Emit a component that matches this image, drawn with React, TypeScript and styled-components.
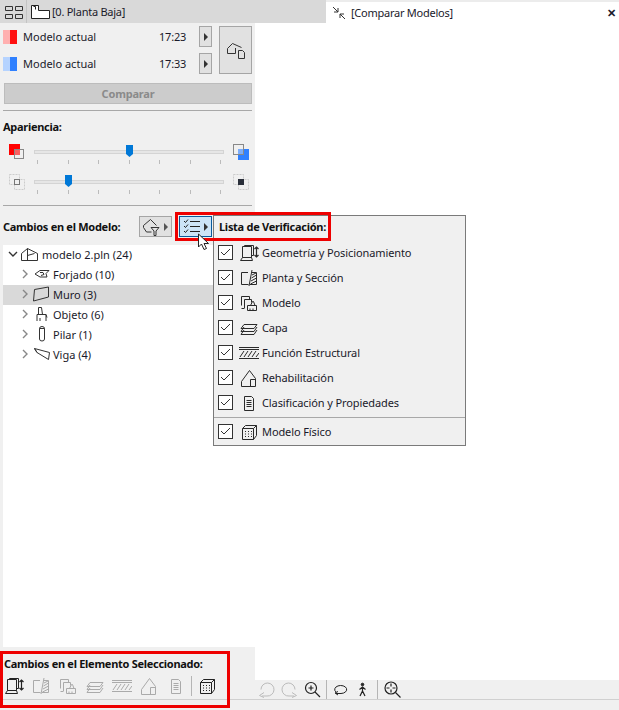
import React from "react";
import styled, { createGlobalStyle } from "styled-components";

const GlobalStyle = createGlobalStyle`
  html, body { margin: 0; padding: 0; background: #f0f0f0; }
  body { font-family: "Noto Sans", "Open Sans", sans-serif; font-size: 11px; color: #1a1a2a; }
  * { box-sizing: border-box; }
`;

const Page = styled.div`
  position: relative;
  width: 619px;
  height: 710px;
  display: flex;
  flex-direction: column;
  overflow: hidden;
`;

// Top tabs
const TabBar = styled.div`
  height: 23px;
  display: flex;
  flex: none;
  letter-spacing: -0.25px;
`;
const PlanTab = styled.div`
  width: 326px;
  background: #d9d9d9;
  display: flex;
  align-items: center;
  padding-left: 5px;
  gap: 1px;
`;
const TabDivider = styled.div`
  width: 1px;
  height: 23px;
  background: #c4c4c4;
  margin: 0 3px 0 2px;
`;
const ModelTab = styled.div`
  flex: 1;
  background: #fff;
  border-top: 2px solid #ececec;
  display: flex;
  align-items: center;
  padding: 0 3px 0 6px;
  gap: 5px;
`;
const TabTitle = styled.span`
  flex: 1;
`;
const Close = styled.span`
  font-size: 11px;
  font-weight: 700;
`;

const Body = styled.div`
  flex: 1;
  display: flex;
  min-height: 0;
`;

// Left panel
const Sidebar = styled.div`
  width: 255px;
  flex: none;
  display: flex;
  flex-direction: column;
  background: #f0f0f0;
`;
const CompareBlock = styled.div`
  display: flex;
  flex: none;
  padding: 3px 3px 0 3px;
  height: 52px;
`;
const ModelRows = styled.div`
  width: 213px;
  display: flex;
  flex-direction: column;
  gap: 6px;
`;
const ModelRow = styled.div`
  height: 21px;
  display: flex;
  align-items: center;
`;
const Swatch = styled.div<{ $light: string; $strong: string }>`
  width: 14px;
  height: 14px;
  background: linear-gradient(90deg, ${(p) => p.$light} 50%, ${(p) => p.$strong} 50%);
`;
const ModelName = styled.span`
  margin-left: 6px;
  width: 136px;
`;
const ModelTime = styled.span`
  width: 40px;
  letter-spacing: -0.2px;
`;
const ArrowButton = styled.button`
  width: 13px;
  height: 21px;
  padding: 0;
  border: 1px solid #a5a5a5;
  background: #e1e1e1;
  display: flex;
  align-items: center;
  justify-content: center;
`;
const Arrow = styled.span<{ $color?: string }>`
  display: block;
  width: 0;
  height: 0;
  flex: none;
  border-left: 4px solid ${(p) => p.$color || "#333"};
  border-top: 4px solid transparent;
  border-bottom: 4px solid transparent;
`;
const BigButton = styled.button`
  width: 33px;
  height: 48px;
  margin-left: 3px;
  padding: 0;
  border: 1px solid #a5a5a5;
  background: #e1e1e1;
  display: flex;
  align-items: center;
  justify-content: center;
`;
const CompareButton = styled.button`
  margin: 8px 3px 0 4px;
  height: 21px;
  flex: none;
  border: 1px solid #bcbcbc;
  background: #cccccc;
  color: #8a8a8a;
  font: 700 11px "Noto Sans", sans-serif;
  letter-spacing: -0.2px;
  padding: 0;
`;
const Rule = styled.div<{ $top?: number; $bottom?: number }>`
  height: 1px;
  flex: none;
  margin: ${(p) => p.$top || 0}px 3px ${(p) => p.$bottom || 0}px;
  background: #a8a8a8;
`;
const SectionLabel = styled.div`
  font-weight: 700;
  line-height: 15px;
  padding-left: 3px;
  color: #111;
  letter-spacing: -0.28px;
`;
const SliderGroup = styled.div`
  display: flex;
  flex-direction: column;
  flex: none;
  gap: 3px;
  margin-top: 14px;
`;
const SliderRow = styled.div`
  display: flex;
  align-items: flex-start;
  height: 27px;
  padding-left: 9px;
`;
const SliderBox = styled.div`
  position: relative;
  width: 190px;
  margin: 0 9px;
  padding-top: 2px;
`;
const Track = styled.div`
  height: 4px;
  background: #e6e6e6;
  border: 1px solid #d4d4d4;
`;
const Thumb = styled.div<{ $at: number }>`
  position: absolute;
  top: -3px;
  left: ${(p) => p.$at}px;
  width: 7px;
  height: 12px;
  background: #0078d7;
  clip-path: polygon(0 0, 100% 0, 100% 75%, 50% 100%, 0 75%);
`;
const Ticks = styled.div`
  display: flex;
  justify-content: space-between;
  padding: 0 3px;
  margin-top: 6px;
`;
const Tick = styled.span`
  width: 1px;
  height: 4px;
  background: #bbb;
`;
const SideIcon = styled.svg`
  flex: none;
  margin-top: -4px;
`;
const ChangesHeader = styled.div`
  height: 39px;
  flex: none;
  display: flex;
  align-items: center;
  padding: 2px 0 0 3px;
  font-weight: 700;
  color: #111;
  letter-spacing: -0.28px;
`;
const ChangesLabel = styled.span`
  width: 136px;
`;
const DropButton = styled.button<{ $active?: boolean }>`
  width: 33px;
  height: 21px;
  margin-right: 7px;
  padding: 0 3px 0 2px;
  border: 1px solid ${(p) => (p.$active ? "#0a5a9c" : "#a5a5a5")};
  background: ${(p) => (p.$active ? "#cce4f7" : "#e1e1e1")};
  display: flex;
  align-items: center;
  justify-content: space-between;
`;
const Tree = styled.div`
  flex: 1;
  margin-left: 3px;
  background: #fff;
`;
const TreeRow = styled.div<{ $depth: number; $selected?: boolean }>`
  height: 20px;
  display: flex;
  align-items: center;
  padding-left: ${(p) => (p.$depth ? 17 : 5)}px;
  padding-bottom: 2px;
  background: ${(p) => (p.$selected ? "#d9d9d9" : "transparent")};
  gap: 3px;
`;
const TreeIconSlot = styled.span`
  width: 17px;
  display: flex;
  justify-content: center;
  flex: none;
`;
const RootIconSlot = styled(TreeIconSlot)`
  margin-right: 1px;
`;
const Chevron = styled.svg`
  flex: none;
`;
const SelectedPanel = styled.div`
  height: 52px;
  flex: none;
  padding: 9px 0 0 4px;
`;
const SelectedTitle = styled.div`
  font-weight: 700;
  line-height: 15px;
  color: #111;
  letter-spacing: -0.28px;
`;
const IconStrip = styled.div`
  display: flex;
  align-items: center;
  height: 24px;
  margin-top: 3px;
  gap: 7px;
  color: #aaa;
`;
const StripDivider = styled.div`
  width: 1px;
  height: 20px;
  background: #b5b5b5;
  margin: 0 -2px;
`;
const DarkIcon = styled.span`
  color: #222;
  display: flex;
`;

// Right view
const View = styled.div`
  flex: 1;
  display: flex;
  flex-direction: column;
`;
const Canvas = styled.div`
  flex: 1;
  background: #fff;
`;
const ViewToolbar = styled.div`
  height: 19px;
  flex: none;
  display: flex;
  align-items: center;
  padding-left: 3px;
  gap: 6px;
`;
const ToolIcon = styled.span<{ $muted?: boolean }>`
  color: ${(p) => (p.$muted ? "#bbb" : "#222")};
  display: flex;
`;
const WalkIcon = styled(ToolIcon)`
  margin: 0 4px 0 3px;
`;
const ToolDivider = styled.div`
  width: 1px;
  height: 19px;
  background: #b5b5b5;
  margin-left: -1px;
`;
const StatusBar = styled.div`
  height: 11px;
  flex: none;
  border-top: 1px solid #d0d0d0;
`;

// Overlays
const Menu = styled.div`
  position: absolute;
  left: 213px;
  top: 215px;
  width: 253px;
  height: 231px;
  background: #f0f0f0;
  border: 1px solid #7a7a7a;
  display: flex;
  flex-direction: column;
`;
const MenuTitle = styled.div`
  height: 24px;
  padding: 3px 0 0 5px;
  font-weight: 700;
  line-height: 15px;
  color: #111;
  letter-spacing: -0.28px;
`;
const MenuRow = styled.div`
  height: 25px;
  flex: none;
  display: flex;
  align-items: center;
  padding-left: 4px;
  letter-spacing: -0.1px;
`;
const Check = styled.span`
  width: 15px;
  height: 15px;
  border: 1px solid #333;
  background: #fff;
  display: flex;
  align-items: center;
  justify-content: center;
  margin-right: 5px;
`;
const MenuIcon = styled.span`
  width: 22px;
  display: flex;
  justify-content: center;
  margin-right: 2px;
  color: #2a2a2a;
`;
const MenuRule = styled.div`
  height: 1px;
  background: #a8a8a8;
  margin: 2px 0 1px 0;
`;
const Callout = styled.div<{ $l: number; $t: number; $w: number; $h: number }>`
  position: absolute;
  left: ${(p) => p.$l}px;
  top: ${(p) => p.$t}px;
  width: ${(p) => p.$w}px;
  height: ${(p) => p.$h}px;
  border: 3px solid #ee0000;
  pointer-events: none;
`;
const CursorMark = styled.svg`
  position: absolute;
  left: 197px;
  top: 233px;
`;
const PlainSvg = styled.svg`
  display: block;
  flex: none;
`;

type IconProps = { children: React.ReactNode; w?: number; h?: number };
const Ico = ({ children, w = 20, h = 18 }: IconProps) => (
  <PlainSvg width={w} height={h} viewBox={`0 0 ${w} ${h}`} fill="none" stroke="currentColor" strokeWidth="1">
    {children}
  </PlainSvg>
);

const GeometryIcon = () => (
  <Ico>
    <path d="M3.500 13.500v-11h9v11zM5.500 2.500v-1h9v10h-2M1.500 16.500l2-3h9l1 3z" />
    <path d="M17.500 3v10M15.500 5l2-2 2 2M15.500 11l2 2 2-2" strokeWidth="1.2" />
  </Ico>
);
const PlanIcon = () => (
  <Ico>
    <path d="M9 3.500H2.500v12h7M13 3.500h4.500v12H11" />
    <path d="M13 1l-3 16M13 6l4-2M12.500 9l5-3M12 12l5.500-3M11.500 15l6-3" />
  </Ico>
);
const ModelIcon = () => (
  <Ico>
    <path d="M2.500 11.500v-9h8v3M5 14.500H2.500M5.500 5.500h7v3M5.500 5.500v9" />
    <path d="M8.500 16.500v-5h9v5zM11.500 11.500l2-4h1l1.500 4M11 16.500v-2M14 16.500v-2" />
  </Ico>
);
const LayerIcon = () => (
  <Ico>
    <path d="M5 5.500h13l-3 4H2zM5 8l-3 4.500h13l3-4.500M5 11l-3 4.500h13l3-4.500" />
  </Ico>
);
const StructureIcon = () => (
  <Ico>
    <path d="M0 3.500h20M0 5.500h20M0 14.500h20" />
    <path d="M1 13l4-6M5 13l4-6M9 13l4-6M13 13l4-6M17 13l3-4" />
  </Ico>
);
const RenovationIcon = () => (
  <Ico>
    <path d="M2.500 17.500v-5l8-11 6 8v8zM11.500 17.500v-7h5" />
  </Ico>
);
const ListIcon = () => (
  <Ico>
    <path d="M5.500 2.500h7l2 2v12h-9zM7.500 6.500h5M7.500 8.500h5M7.500 10.500h5M7.500 12.500h5" />
  </Ico>
);
const PhysicalIcon = () => (
  <Ico>
    <path d="M3.500 5.500l3-3h11v10l-3 4h-11zM3.500 5.500h11v11M14.500 5.500l3-3" />
    <path d="M6 8.500h1M9 8.500h1M12 8.500h1M6 11h1M9 11h1M12 11h1M6 13.500h1M9 13.500h1M12 13.500h1" />
  </Ico>
);
const ChecklistIcon = () => (
  <PlainSvg width="19" height="17" viewBox="0 0 19 17" fill="none" stroke="#222">
    <path d="M8 3.500h10M8 8.500h10M8 13.500h10" />
    <path d="M2 3l1.500 1.500L6 1.500M2 8l1.500 1.500L6 6.500M2 13l1.500 1.500L6 11.500" />
  </PlainSvg>
);
const Tickmark = () => (
  <PlainSvg width="11" height="9" viewBox="0 0 11 9" fill="none" stroke="#333">
    <path d="M1 4l3 3 6-6" />
  </PlainSvg>
);

const TreeChevron = ({ open }: { open?: boolean }) => (
  <Chevron width="10" height="10" viewBox="0 0 10 10" fill="none" stroke={open ? "#333" : "#888"} strokeWidth="1.4">
    <path d={open ? "M1 3l4 4 4-4" : "M3 1l4 4-4 4"} />
  </Chevron>
);

const checks = [
  { label: "Geometría y Posicionamiento", icon: <GeometryIcon /> },
  { label: "Planta y Sección", icon: <PlanIcon /> },
  { label: "Modelo", icon: <ModelIcon /> },
  { label: "Capa", icon: <LayerIcon /> },
  { label: "Función Estructural", icon: <StructureIcon /> },
  { label: "Rehabilitación", icon: <RenovationIcon /> },
  { label: "Clasificación y Propiedades", icon: <ListIcon /> },
];

const treeItems = [
  {
    label: "Forjado (10)",
    icon: (
      <svg width="16" height="12" viewBox="0 0 16 12" fill="none" stroke="#333">
        <path d="M1 6L6 2.500h9l-3 3 1 3.500H6zM6 4.500h3l1 2-3 1" />
      </svg>
    ),
  },
  {
    label: "Muro (3)",
    selected: true,
    icon: (
      <svg width="17" height="16" viewBox="0 0 17 16" fill="none" stroke="#333">
        <path d="M1.500 3.500L15.500 1v10L.5 15z" />
      </svg>
    ),
  },
  {
    label: "Objeto (6)",
    icon: (
      <svg width="12" height="16" viewBox="0 0 12 16" fill="none" stroke="#333">
        <path d="M2.500 8V1.500h3l1 7M1 15V8.500h9V15M4 15v-3M10 8.500l1 3" />
      </svg>
    ),
  },
  {
    label: "Pilar (1)",
    icon: (
      <svg width="8" height="16" viewBox="0 0 8 16" fill="none" stroke="#333">
        <path d="M1.500 2.500a2.500 2 0 0 1 5 0V13a2.500 2 0 0 1-5 0zM1.500 2.500h5" />
      </svg>
    ),
  },
  {
    label: "Viga (4)",
    icon: (
      <svg width="16" height="14" viewBox="0 0 16 14" fill="none" stroke="#333">
        <path d="M.5 1.500l15 4-1 7L3 5.500zM.5 1.500L3 5.500" />
      </svg>
    ),
  },
];

const ticks = [0, 1, 2, 3, 4, 5, 6];

const Slider = ({ at }: { at: number }) => (
  <SliderBox>
    <Track />
    <Thumb $at={at} />
    <Ticks>
      {ticks.map((t) => (
        <Tick key={t} />
      ))}
    </Ticks>
  </SliderBox>
);

const App = () => {
  return (
    <Page>
      <GlobalStyle />
      <TabBar>
        <PlanTab>
          <PlainSvg width="18" height="14" viewBox="0 0 18 14" fill="none" stroke="#333">
            <path d="M.5 1.500h7v4h-7zM10.500 1.500h7v4h-7zM.5 9.500h7v4h-7zM10.500 9.500h7v4h-7z" />
          </PlainSvg>
          <TabDivider />
          <PlainSvg width="20" height="16" viewBox="0 0 20 16" fill="#fff" stroke="#222">
            <path d="M.5 1.500h7v5h11v8H.5z" />
            <path d="M2.500 2.500h2v3" fill="none" />
          </PlainSvg>
          [0. Planta Baja]
        </PlanTab>
        <ModelTab>
          <PlainSvg width="14" height="14" viewBox="0 0 14 14" fill="none" stroke="#333">
            <path d="M1 1l5 5M6 2v4H2M13 13L8 8M8 12V8h4" />
          </PlainSvg>
          <TabTitle>[Comparar Modelos]</TabTitle>
          <Close>✕</Close>
        </ModelTab>
      </TabBar>
      <Body>
        <Sidebar>
          <CompareBlock>
            <ModelRows>
              <ModelRow>
                <Swatch $light="#ffb0b0" $strong="#ff1010" />
                <ModelName>Modelo actual</ModelName>
                <ModelTime>17:23</ModelTime>
                <ArrowButton>
                  <Arrow />
                </ArrowButton>
              </ModelRow>
              <ModelRow>
                <Swatch $light="#b5d3ff" $strong="#2f80ff" />
                <ModelName>Modelo actual</ModelName>
                <ModelTime>17:33</ModelTime>
                <ArrowButton>
                  <Arrow />
                </ArrowButton>
              </ModelRow>
            </ModelRows>
            <BigButton>
              <svg width="20" height="20" viewBox="0 0 20 20" fill="none" stroke="#333">
                <path d="M1.500 13.500v-5l5-5 9 4M1.500 13.500h8M9.500 8v5.500" />
                <path d="M12.500 10.500h4l2 2v6h-6z" fill="#e1e1e1" />
              </svg>
            </BigButton>
          </CompareBlock>
          <CompareButton>Comparar</CompareButton>
          <Rule $top={6} $bottom={8} />
          <SectionLabel>Apariencia:</SectionLabel>
          <SliderGroup>
            <SliderRow>
              <SideIcon width="16" height="16" viewBox="0 0 16 16" fill="none">
                <rect x="0" y="0" width="11" height="11" fill="#ff0000" />
                <rect x="5.500" y="5.500" width="9" height="9" stroke="#888" fill="#f0f0f0" fillOpacity="0.4" />
              </SideIcon>
              <Slider at={92} />
              <SideIcon width="16" height="16" viewBox="0 0 16 16" fill="none">
                <rect x="5" y="5" width="11" height="11" fill="#2f80ff" />
                <rect x="0.500" y="0.500" width="10" height="10" stroke="#888" fill="#f0f0f0" fillOpacity="0.4" />
              </SideIcon>
            </SliderRow>
            <SliderRow>
              <SideIcon width="16" height="16" viewBox="0 0 16 16" fill="none">
                <rect x="0.500" y="0.500" width="10" height="10" stroke="#ccc" strokeDasharray="2 1" />
                <rect x="5.500" y="5.500" width="10" height="10" stroke="#ccc" strokeDasharray="2 1" />
                <rect x="5.500" y="5.500" width="5" height="5" stroke="#777" />
              </SideIcon>
              <Slider at={31} />
              <SideIcon width="16" height="16" viewBox="0 0 16 16" fill="none">
                <rect x="0.500" y="0.500" width="10" height="10" stroke="#ccc" strokeDasharray="2 1" />
                <rect x="5.500" y="5.500" width="10" height="10" stroke="#ccc" strokeDasharray="2 1" />
                <rect x="5" y="5" width="6" height="6" fill="#2a2f3a" />
              </SideIcon>
            </SliderRow>
          </SliderGroup>
          <Rule />
          <ChangesHeader>
            <ChangesLabel>Cambios en el Modelo:</ChangesLabel>
            <DropButton>
              <PlainSvg width="18" height="18" viewBox="0 0 18 18" fill="none" stroke="#333">
                <path d="M1.500 9.500v-2l7-6 6 6M1.500 9.500l3 4.500h5" />
                <path d="M9 9.500h8l-3 3.500v4.500h-2V13z" fill="#e1e1e1" />
              </PlainSvg>
              <Arrow $color="#555" />
            </DropButton>
            <DropButton $active>
              <ChecklistIcon />
              <Arrow />
            </DropButton>
          </ChangesHeader>
          <Tree>
            <TreeRow $depth={0}>
              <TreeChevron open />
              <RootIconSlot>
                <svg width="17" height="14" viewBox="0 0 17 14" fill="none" stroke="#333">
                  <path d="M.5 13.500v-7l6-5 10 5v7zM6.500 1.500v12M6.500 8.500l7-2" />
                </svg>
              </RootIconSlot>
              <span>modelo 2.pln (24)</span>
            </TreeRow>
            {treeItems.map((item) => (
              <TreeRow key={item.label} $depth={1} $selected={item.selected}>
                <TreeChevron />
                <TreeIconSlot>{item.icon}</TreeIconSlot>
                <span>{item.label}</span>
              </TreeRow>
            ))}
          </Tree>
          <SelectedPanel>
            <SelectedTitle>Cambios en el Elemento Seleccionado:</SelectedTitle>
            <IconStrip>
              <DarkIcon>
                <GeometryIcon />
              </DarkIcon>
              <PlanIcon />
              <ModelIcon />
              <LayerIcon />
              <StructureIcon />
              <RenovationIcon />
              <ListIcon />
              <StripDivider />
              <DarkIcon>
                <PhysicalIcon />
              </DarkIcon>
            </IconStrip>
          </SelectedPanel>
        </Sidebar>
        <View>
          <Canvas />
          <ViewToolbar>
            <ToolIcon $muted>
              <Ico w={17} h={17}>
                <path d="M3 8.500A6.500 6.500 0 1 1 9 15H4" />
                <path d="M6 11.500l-4.500 3 4.500 2" />
              </Ico>
            </ToolIcon>
            <ToolIcon $muted>
              <Ico w={17} h={17}>
                <path d="M14 8.500A6.500 6.500 0 1 0 8 15h5" />
                <path d="M11 11.500l4.500 3-4.500 2" />
              </Ico>
            </ToolIcon>
            <ToolIcon>
              <Ico w={17} h={17}>
                <circle cx="7" cy="7" r="5.500" strokeWidth="1.2" />
                <path d="M4.500 7h5M7 4.500v5M11 11l5 5" strokeWidth="1.2" />
              </Ico>
            </ToolIcon>
            <ToolDivider />
            <ToolIcon>
              <Ico w={15} h={15}>
                <path d="M3 10A6 4 0 1 1 8 11.500H3M5 9.500l-3 1.500 3 2" />
              </Ico>
            </ToolIcon>
            <WalkIcon>
              <Ico w={11} h={15}>
                <circle cx="5.500" cy="2.500" r="1.300" fill="currentColor" />
                <path d="M5.500 4.500v4.500M2.500 7.500l3-2.500 3 2.500M5.500 9L3 14M5.500 9l2.500 5" strokeWidth="1.2" />
              </Ico>
            </WalkIcon>
            <ToolDivider />
            <ToolIcon>
              <Ico w={17} h={17}>
                <circle cx="7" cy="7" r="6" strokeWidth="1.2" />
                <path d="M7 2.500v3M7 8.500v3M2.500 7h3M8.500 7h3M11.500 11.500l5 5" strokeWidth="1.2" />
              </Ico>
            </ToolIcon>
          </ViewToolbar>
        </View>
      </Body>
      <StatusBar />

      <Menu>
        <MenuTitle>Lista de Verificación:</MenuTitle>
        {checks.map((c) => (
          <MenuRow key={c.label}>
            <Check>
              <Tickmark />
            </Check>
            <MenuIcon>{c.icon}</MenuIcon>
            <span>{c.label}</span>
          </MenuRow>
        ))}
        <MenuRule />
        <MenuRow>
          <Check>
            <Tickmark />
          </Check>
          <MenuIcon>
            <PhysicalIcon />
          </MenuIcon>
          <span>Modelo Físico</span>
        </MenuRow>
      </Menu>

      <Callout $l={175} $t={212} $w={156} $h={29} />
      <Callout $l={0} $t={651} $w={230} $h={57} />

      <CursorMark width="14" height="18" viewBox="0 0 14 18" fill="#fff" stroke="#222">
        <path d="M1.500 1v13l3-3 2.500 5.500 2.500-1-2.500-5h4.500z" />
      </CursorMark>
    </Page>
  );
};

export default App;
